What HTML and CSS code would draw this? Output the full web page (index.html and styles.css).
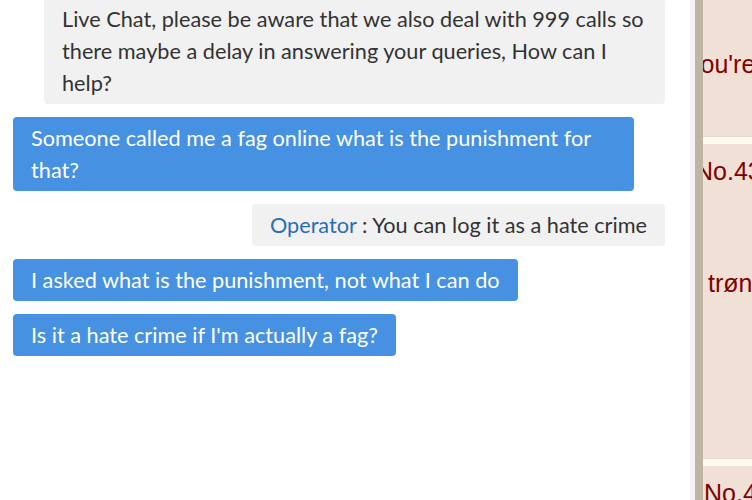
FILE: index.html
```html
<!DOCTYPE html>
<html lang="en">
<head>
<meta charset="utf-8">
<title>Live Chat</title>
<link rel="stylesheet" href="styles.css">
</head>
<body>
<div class="page">
  <main class="chat">
    <div class="msg msg-in msg-first">Live Chat, please be aware that we also deal with 999 calls so there maybe a delay in answering your queries, How can I help?</div>
    <div class="msg msg-out">Someone called me a fag online what is the punishment for that?</div>
    <div class="msg msg-in"><span class="who">Operator</span> : You can log it as a hate crime</div>
    <div class="msg msg-out">I asked what is the punishment, not what I can do</div>
    <div class="msg msg-out">Is it a hate crime if I'm actually a fag?</div>
  </main>
  <div class="gutter"></div>
  <div class="rail"></div>
  <aside class="board">
    <div class="post post-a"><p class="line l-youre">you're</p></div>
    <div class="divider"></div>
    <div class="post post-b">
      <p class="line l-no1">No.43</p>
      <p class="line l-tron">trøn</p>
    </div>
    <div class="divider"></div>
    <div class="post post-c"><p class="line l-no2">No.4</p></div>
  </aside>
</div>
</body>
</html>
```

FILE: styles.css
```css
html, body {
  margin: 0;
  padding: 0;
  background: #ffffff;
}
.page {
  display: flex;
  width: 752px;
  height: 500px;
  overflow: hidden;
}
.chat {
  width: 690px;
  box-sizing: border-box;
  padding: 0 25px 0 13px;
  display: flex;
  flex-direction: column;
  gap: 13px;
  font-family: "Lato", "Open Sans", sans-serif;
  font-size: 21.7px;
  line-height: 32px;
  flex-shrink: 0;
}
.msg {
  max-width: 621px;
  box-sizing: border-box;
  padding: 5px 18px;
  border-radius: 4px;
}
.msg-first {
  margin-top: -2px;
}
.msg-in {
  align-self: flex-end;
  background: #f1f1f1;
  color: #333333;
}
.msg-out {
  align-self: flex-start;
  background: #4691e1;
  color: #ffffff;
}
.who {
  color: #2a6db8;
}
.gutter {
  width: 5px;
  background: #f3f1f4;
  flex-shrink: 0;
}
.rail {
  width: 8px;
  background: #bfb5a3;
  flex-shrink: 0;
}
.board {
  flex: 1;
  background: #f0e0d6;
  overflow: hidden;
  display: flex;
  flex-direction: column;
  font-family: "Liberation Sans", Arial, sans-serif;
  font-size: 25px;
  color: #800000;
}
.divider {
  height: 7px;
  border-top: 1px solid #e8dccc;
  background: #fefbee;
  flex-shrink: 0;
}
.post {
  flex-shrink: 0;
}
.post-a { height: 136px; }
.post-b { height: 314px; }
.post-c { height: 34px; }
.line {
  margin: 0;
  white-space: nowrap;
  line-height: 25px;
}
.l-youre {
  padding-top: 52px;
  margin-left: -15px;
}
.l-no1 {
  padding-top: 15px;
  margin-left: -8px;
}
.l-tron {
  padding-top: 87px;
  margin-left: 5px;
}
.l-no2 {
  padding-top: 15px;
  margin-left: 1px;
}
```
